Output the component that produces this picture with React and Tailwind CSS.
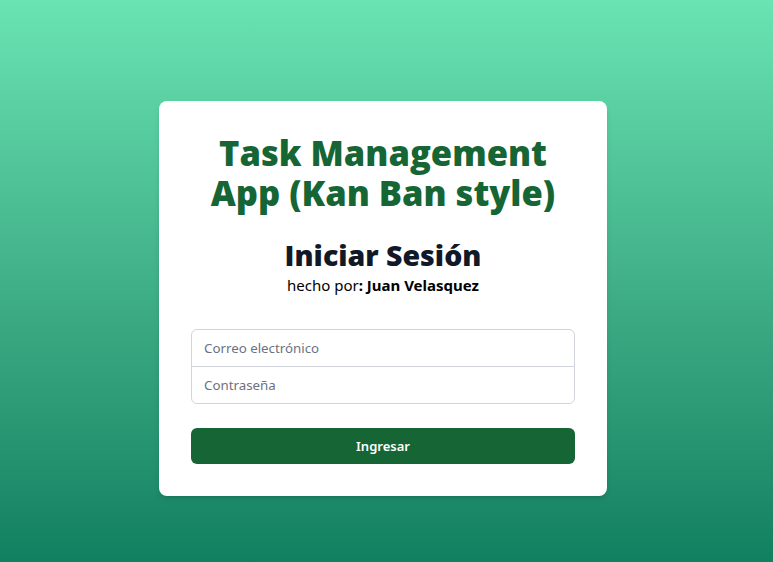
export default function App() {
  return (
    <div
      className="flex min-h-screen items-center justify-center bg-gradient-to-b from-[#6ae4b3] to-[#0f8060] pt-[34px] pr-[23px] pl-4"
      style={{ fontFamily: '"Noto Sans", "Open Sans", sans-serif' }}
    >
      <div className="w-full max-w-md rounded-lg bg-white p-8 shadow-md">
        <h1
          className="text-center text-[34.5px] leading-10 font-extrabold text-[#166534]"
          style={{ fontFamily: '"Open Sans", "Noto Sans", sans-serif' }}
        >
          Task Management App (Kan Ban style)
        </h1>
        <h2
          className="mt-6 text-center text-[28.5px] leading-9 font-extrabold text-[#111827]"
          style={{ fontFamily: '"Open Sans", "Noto Sans", sans-serif' }}
        >
          Iniciar Sesión
        </h2>
        <p className="text-center text-[15px] leading-6 text-black">
          hecho por<b>: Juan Velasquez</b>
        </p>

        <form className="mt-8 space-y-6" onSubmit={(e) => e.preventDefault()}>
          <div className="-space-y-px rounded-md">
            <input
              type="email"
              placeholder="Correo electrónico"
              className="relative block w-full rounded-t-md border border-[#d1d5db] px-3 py-2 text-[13.3px] leading-5 text-gray-900 placeholder-[#6b7280] outline-none"
            />
            <input
              type="password"
              placeholder="Contraseña"
              className="relative block w-full rounded-b-md border border-[#d1d5db] px-3 py-2 text-[13.3px] leading-5 text-gray-900 placeholder-[#6b7280] outline-none"
            />
          </div>
          <button
            type="submit"
            className="flex w-full justify-center rounded-md bg-[#166534] px-4 py-2 text-[13px] leading-5 font-semibold text-white"
          >
            Ingresar
          </button>
        </form>
      </div>
    </div>
  );
}
